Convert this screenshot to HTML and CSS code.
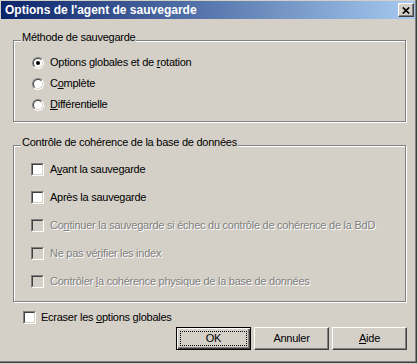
FILE: index.html
```html
<!DOCTYPE html>
<html>
<head>
<meta charset="utf-8">
<link rel="stylesheet" href="styles.css">
</head>
<body>
<div class="window">
  <div class="titlebar">
    <span class="title">Options de l'agent de sauvegarde</span>
    <span class="close"><svg width="8" height="7" viewBox="0 0 8 7"><path d="M0.8 0.5L7.2 6.5M7.2 0.5L0.8 6.5" stroke="#000" stroke-width="1.7" fill="none"/></svg></span>
  </div>
  <div class="content">
    <div class="group g1">
      <span class="legend">Méthode de sauvegarde</span>
      <div class="row rrow"><span class="radio checked"></span><span class="label">Options globales et de <u>r</u>otation</span></div>
      <div class="row rrow"><span class="radio"></span><span class="label">C<u>o</u>mplète</span></div>
      <div class="row rrow"><span class="radio"></span><span class="label"><u>D</u>ifférentielle</span></div>
    </div>
    <div class="group g2">
      <span class="legend">Contrôle de cohérence de la base de données</span>
      <div class="row crow"><span class="check"></span><span class="label">A<u>v</u>ant la sauvegarde</span></div>
      <div class="row crow"><span class="check"></span><span class="label">Après la sauve<u>g</u>arde</span></div>
      <div class="row crow disabled"><span class="check"></span><span class="label">Co<u>n</u>tinuer la sauvegarde si échec du contrôle de cohérence de la BdD</span></div>
      <div class="row crow disabled"><span class="check"></span><span class="label">Ne pas vé<u>r</u>ifier les index</span></div>
      <div class="row crow disabled"><span class="check"></span><span class="label">Contrôler <u>l</u>a cohérence physique de la base de données</span></div>
    </div>
    <div class="row erow"><span class="check"></span><span class="label">Ecraser les <u>o</u>ptions globales</span></div>
    <div class="buttons">
      <span class="btn default">OK</span>
      <span class="btn">Annuler</span>
      <span class="btn"><span><u>A</u>ide</span></span>
    </div>
  </div>
</div>
</body>
</html>
```
FILE: styles.css
```css
html, body {
  margin: 0;
  padding: 0;
}
body {
  background: #d4d0c8;
  font-family: "Liberation Sans", Arial, sans-serif;
  font-size: 11px;
  letter-spacing: -0.25px;
  color: #000;
}
.window {
  width: 417px;
  height: 363px;
  box-sizing: border-box;
  padding-top: 1px;
  border-right: 1px solid #404040;
  border-bottom: 1px solid #404040;
  box-shadow: inset -1px -1px 0 #808080;
}
.titlebar {
  height: 18px;
  margin-left: 1px;
  margin-right: 1px;
  padding-left: 4px;
  padding-right: 1px;
  display: flex;
  align-items: center;
  justify-content: space-between;
  background: linear-gradient(to right, #0a246a, #a6caf0);
  color: #fff;
}
.title {
  font-weight: bold;
  font-size: 12px;
  letter-spacing: 0;
}
.close {
  width: 16px;
  height: 14px;
  box-sizing: border-box;
  background: #d4d0c8;
  border: 1px solid;
  border-color: #fff #404040 #404040 #fff;
  box-shadow: inset -1px -1px 0 #808080;
  display: flex;
  align-items: center;
  justify-content: center;
}
.close svg {
  display: block;
}
.content {
  padding-left: 13px;
}
.group {
  position: relative;
  width: 393px;
  box-sizing: border-box;
  border: 1px solid #808080;
  box-shadow: inset 1px 1px 0 #fff, 1px 1px 0 #fff;
}
.g1 {
  margin-top: 21px;
  padding: 11px 0 6px 0;
}
.g2 {
  margin-top: 23px;
  padding: 9px 0 6px 0;
}
.legend {
  position: absolute;
  top: -10px;
  left: 7px;
  padding: 0 1px;
  line-height: 13px;
  background: #d4d0c8;
}
.row {
  display: flex;
  align-items: center;
}
.rrow {
  height: 21px;
  padding-left: 18px;
}
.crow {
  height: 28px;
  padding-left: 17px;
}
.rrow .label,
.crow .label {
  margin-left: 6px;
}
.erow {
  height: 16px;
  margin-top: 7px;
  padding-left: 10px;
}
.erow .label {
  margin-left: 5px;
}
.label {
  line-height: 13px;
  white-space: nowrap;
}
u {
  text-decoration: underline;
  text-underline-offset: 1px;
}
.radio {
  position: relative;
  width: 12px;
  height: 12px;
  box-sizing: border-box;
  border-radius: 50%;
  border: 1px solid;
  border-color: #808080 #fff #fff #808080;
  background: #fff;
  flex: none;
}
.radio::before {
  content: "";
  position: absolute;
  inset: 0;
  border-radius: 50%;
  border: 1px solid;
  border-color: #404040 #d4d0c8 #d4d0c8 #404040;
}
.radio.checked::after {
  content: "";
  position: absolute;
  left: 3px;
  top: 3px;
  width: 4px;
  height: 4px;
  border-radius: 50%;
  background: #000;
}
.check {
  position: relative;
  width: 13px;
  height: 13px;
  box-sizing: border-box;
  border: 1px solid;
  border-color: #808080 #fff #fff #808080;
  background: #fff;
  flex: none;
}
.check::before {
  content: "";
  position: absolute;
  inset: 0;
  border: 1px solid;
  border-color: #404040 #d4d0c8 #d4d0c8 #404040;
}
.disabled .check {
  background: #d4d0c8;
}
.disabled .label {
  color: #808080;
  text-shadow: 1px 1px 0 #fff;
}
.buttons {
  width: 394px;
  margin-top: 2px;
  display: flex;
  justify-content: flex-end;
  gap: 3px;
}
.btn {
  position: relative;
  width: 75px;
  height: 23px;
  box-sizing: border-box;
  border: 1px solid;
  border-color: #fff #404040 #404040 #fff;
  box-shadow: inset -1px -1px 0 #808080;
  background: #d4d0c8;
  display: flex;
  align-items: center;
  justify-content: center;
  line-height: 13px;
}
.btn.default {
  border: 1px solid #000;
  box-shadow: inset 1px 1px 0 #fff, inset -1px -1px 0 #404040, inset -2px -2px 0 #808080;
}
.btn.default::after {
  content: "";
  position: absolute;
  inset: 3px;
  border: 1px dotted #000;
}
```
